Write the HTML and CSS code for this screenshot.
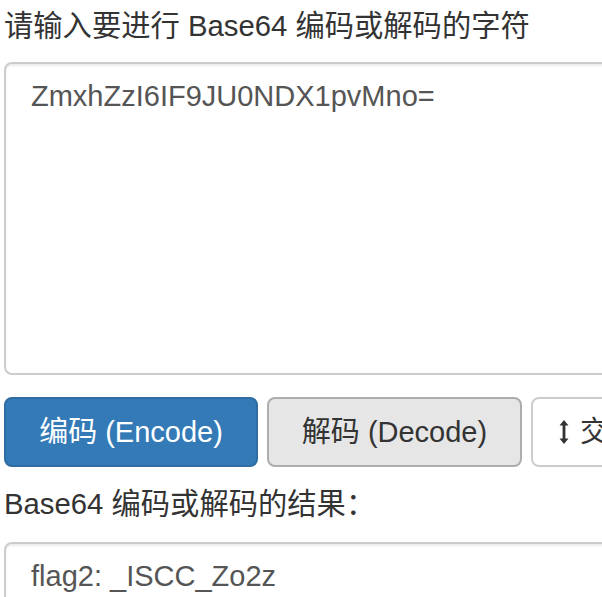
FILE: index.html
```html
<!DOCTYPE html>
<html lang="zh-CN">
<head>
<meta charset="utf-8">
<title>Base64</title>
<link rel="stylesheet" href="styles.css">
</head>
<body>
<div class="page">
  <label class="title">请输入要进行 Base64 编码或解码的字符</label>
  <div class="box input-box">ZmxhZzI6IF9JU0NDX1pvMno=</div>
  <div class="actions">
    <button class="btn btn-primary">编码 (Encode)</button>
    <button class="btn btn-default active">解码 (Decode)</button>
    <button class="btn btn-white"><svg class="icon" width="12" height="26" viewBox="0 0 12 26"><path d="M6 1 L1.5 6.5 H4.6 V19.5 H1.5 L6 25 L10.5 19.5 H7.4 V6.5 H10.5 Z" fill="#333"/></svg> 交换</button>
  </div>
  <label class="title result-title">Base64 编码或解码的结果：</label>
  <div class="box output-box">flag2: _ISCC_Zo2z</div>
</div>
</body>
</html>
```

FILE: styles.css
```css
html, body {
  margin: 0;
  padding: 0;
  overflow: hidden;
  background: #fff;
}
body {
  font-family: "Liberation Sans", "Noto Sans CJK SC", sans-serif;
  font-size: 29px;
  line-height: 41px;
  color: #333;
}
.page {
  width: 800px;
  padding-left: 4px;
}
.title {
  display: block;
  font-weight: normal;
  font-size: 29.3px;
  padding-top: 5px;
  margin-bottom: 16px;
}
.box {
  box-sizing: border-box;
  width: 660px;
  border: 2px solid #ccc;
  border-radius: 8px;
  padding: 12px 25px;
  color: #555;
  background: #fff;
  box-shadow: inset 0 2px 2px rgba(0, 0, 0, 0.075);
}
.input-box {
  height: 313px;
}
.actions {
  display: flex;
  gap: 9px;
  margin-top: 22px;
}
.btn {
  flex-shrink: 0;
  box-sizing: border-box;
  height: 70px;
  border: 2px solid #ccc;
  border-radius: 8px;
  font-family: inherit;
  font-size: 29px;
  line-height: 41px;
  padding: 0 25px;
  color: #333;
  background: #fff;
  display: flex;
  align-items: center;
  justify-content: center;
  white-space: nowrap;
}
.btn-primary {
  width: 254px;
  background: #337ab7;
  border-color: #2e6da4;
  color: #fff;
}
.btn-default {
  width: 255px;
}
.btn-default.active {
  background: #e6e6e6;
  border-color: #adadad;
}
.btn-white {
  width: 200px;
  justify-content: flex-start;
  padding-left: 25px;
}
.icon {
  margin-right: 10px;
}
.result-title {
  margin-top: 16px;
  padding-top: 0;
  margin-bottom: 18px;
}
.output-box {
  height: 120px;
}
```
